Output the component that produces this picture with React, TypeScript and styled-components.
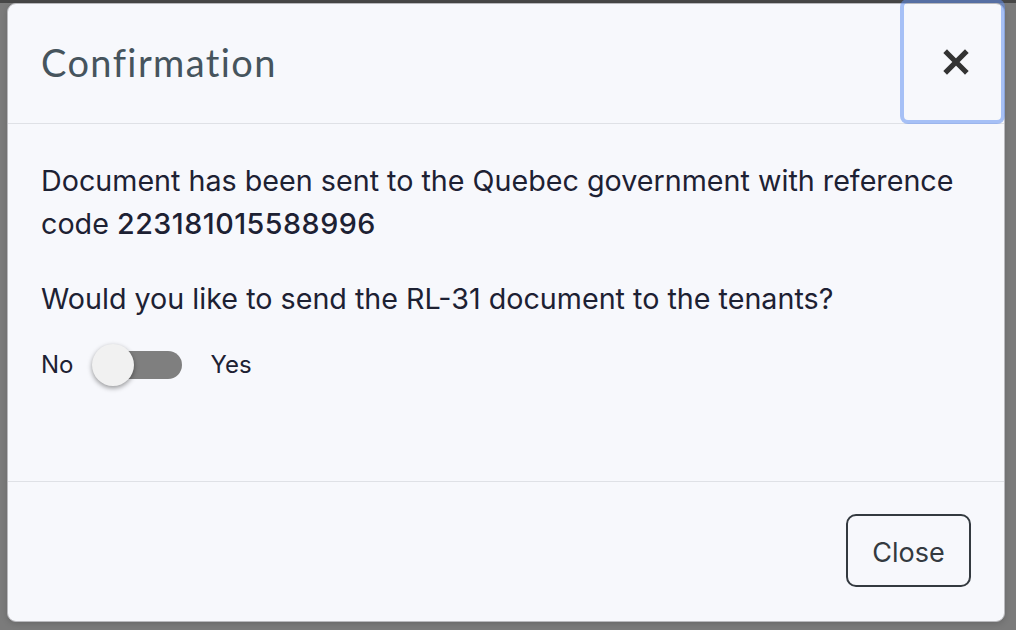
import React from "react";
import styled, { createGlobalStyle } from "styled-components";

const Global = createGlobalStyle`
  html, body { margin: 0; padding: 0; }
  body {
    width: 1016px;
    height: 630px;
    overflow: hidden;
    background: #7b7b7b;
    font-family: Inter, "Noto Sans", sans-serif;
  }
`;

const Backdrop = styled.div`
  position: relative;
  width: 1016px;
  height: 630px;
  box-sizing: border-box;
  padding: 3px 0 0 7px;
  background: linear-gradient(#474747 0 3px, #7b7b7b 3px);
`;

const Modal = styled.div`
  width: 998px;
  height: 619px;
  box-sizing: border-box;
  background: #f7f8fc;
  border: 1px solid #b9b9bd;
  border-radius: 9px;
  display: flex;
  flex-direction: column;
  box-shadow: 0 2px 6px rgba(0, 0, 0, 0.15);
`;

const Header = styled.div`
  flex: none;
  display: flex;
  align-items: stretch;
  justify-content: space-between;
  border-bottom: 1px solid #dfe1e6;
  box-sizing: border-box;
  padding-left: 33px;
  height: 120px;
`;

const Title = styled.h5`
  margin: 0;
  align-self: center;
  font-family: Lato, "Open Sans", sans-serif;
  font-weight: 400;
  font-size: 38px;
  letter-spacing: 1.4px;
  color: #46545d;
  padding-bottom: 4px;
`;

const CloseX = styled.button`
  width: 97px;
  margin: -1px 3px 3px 0;
  border: none;
  background: transparent;
  border-radius: 4px;
  box-shadow: 0 0 0 4px rgba(100, 145, 240, 0.55);
  display: flex;
  align-items: center;
  justify-content: center;
  padding: 0 0 0 7px;
  cursor: pointer;
`;

const Body = styled.div`
  flex: 1;
  padding: 35px 33px 0 33px;
  color: #1d2133;
  font-size: 28.7px;
  line-height: 43px;
`;

const Para = styled.p`
  margin: 0 0 32px 0;
`;

const Code = styled.span`
  font-weight: 500;
  letter-spacing: 0.5px;
`;

const SwitchRow = styled.div`
  display: flex;
  align-items: center;
  margin-top: -9px;
`;

const SwitchLabel = styled.span`
  font-size: 24px;
`;

const Track = styled.div`
  position: relative;
  width: 89px;
  height: 28px;
  border-radius: 14px;
  background: #7f7f7f;
  margin: 0 28px 0 20px;
`;

const Knob = styled.div`
  position: absolute;
  left: -1px;
  top: -7px;
  width: 42px;
  height: 42px;
  border-radius: 50%;
  background: #f1f1f1;
  box-shadow: 0 2px 5px rgba(0, 0, 0, 0.4);
`;

const Footer = styled.div`
  height: 140px;
  flex: none;
  border-top: 1px solid #dfe1e6;
  box-sizing: border-box;
  display: flex;
  align-items: center;
  justify-content: flex-end;
  padding: 0 33px 2px 0;
`;

const Button = styled.button`
  width: 125px;
  height: 73px;
  border: 2px solid #343a40;
  border-radius: 10px;
  background: transparent;
  color: #343a40;
  font-family: Inter, sans-serif;
  font-size: 27px;
  padding: 3px 0 0 0;
`;

export default function App() {
  return (
    <>
      <Global />
      <Backdrop>
        <Modal>
          <Header>
            <Title>Confirmation</Title>
            <CloseX aria-label="Close">
              <svg width="26" height="26" viewBox="0 0 26 26">
                <path d="M4 4 L22 22 M22 4 L4 22" stroke="#333" strokeWidth="5.2" strokeLinecap="square" />
              </svg>
            </CloseX>
          </Header>
          <Body>
            <Para>
              Document has been sent to the Quebec government with reference code <Code>223181015588996</Code>
            </Para>
            <Para>Would you like to send the RL-31 document to the tenants?</Para>
            <SwitchRow>
              <SwitchLabel>No</SwitchLabel>
              <Track>
                <Knob />
              </Track>
              <SwitchLabel>Yes</SwitchLabel>
            </SwitchRow>
          </Body>
          <Footer>
            <Button>Close</Button>
          </Footer>
        </Modal>
      </Backdrop>
    </>
  );
}
